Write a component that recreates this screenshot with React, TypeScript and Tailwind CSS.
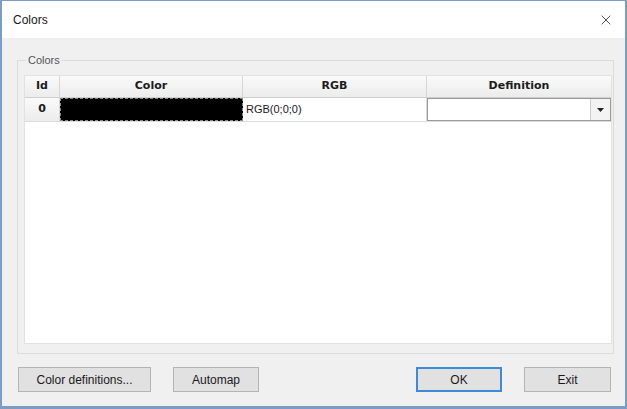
import { X } from "lucide-react";

const cellHead =
  "flex items-center justify-center border-r border-[#d6d6d6] bg-gradient-to-b from-[#fafafa] to-[#ececec] font-bold text-[11px] text-[#1b1b1b] [font-family:'DejaVu_Sans',sans-serif]";

function Btn({ label, w, primary }: { label: string; w: string; primary?: boolean }) {
  return (
    <button
      type="button"
      className={`h-[25px] ${w} flex items-center justify-center bg-[#e1e1e1] text-[12px] text-[#1a1a1a] [font-family:'Liberation_Sans',Arial,sans-serif] ${
        primary ? "border-2 border-[#3c8ad8]" : "border border-[#b4b4b4]"
      }`}
    >
      {label}
    </button>
  );
}

export default function App() {
  return (
    <div className="w-[627px] h-[409px] flex flex-col bg-[#f0f0f0] border-t border-x-2 border-b-[3px] border-[#7c9cc4] [font-family:'Liberation_Sans',Arial,sans-serif]">
      {/* title bar */}
      <div className="h-[37px] bg-white flex items-center justify-between pl-[11px] pr-[11px]">
        <span className="text-[12px] text-[#1a1a1a]">Colors</span>
        <X size={16} strokeWidth={1.3} className="text-[#333]" />
      </div>

      {/* group box */}
      <fieldset className="mt-[15px] ml-[15px] mr-[11px] h-[301px] border border-[#dcdcdc] pl-[6px] pr-[1px] pt-[8px]">
        <legend className="ml-[2px] px-[2px] text-[11px] leading-[14px] text-[#555]">Colors</legend>

        {/* grid */}
        <div className="h-[269px] bg-white border border-[#e2e2e2] flex flex-col">
          <div className="h-[22px] grid grid-cols-[35px_183px_184px_1fr] border-b border-[#cfcfcf]">
            <div className={cellHead}>Id</div>
            <div className={cellHead}>Color</div>
            <div className={cellHead}>RGB</div>
            <div className={`${cellHead} border-r-0`}>Definition</div>
          </div>
          <div className="h-[24px] grid grid-cols-[35px_183px_184px_1fr] border-b border-[#dcdcdc]">
            <div className={`${cellHead}`}>0</div>
            <div className="bg-black border border-dashed border-[#888]" />
            <div className="flex items-center pl-[3px] text-[11px] text-[#1a1a1a] border-r border-[#dcdcdc]">
              RGB(0;0;0)
            </div>
            <div className="flex justify-end border border-[#9a9a9a]">
              <div className="w-[20px] flex items-center justify-center bg-[#f3f3f3] border-l border-[#cfcfcf]">
                <svg width="7" height="4" viewBox="0 0 7 4">
                  <path d="M0 0h7L3.5 4z" fill="#222" />
                </svg>
              </div>
            </div>
          </div>
        </div>
      </fieldset>

      {/* buttons */}
      <div className="mt-[13px] h-[25px] flex items-center pl-[16px] pr-[14px]">
        <Btn label="Color definitions..." w="w-[133px]" />
        <div className="w-[22px]" />
        <Btn label="Automap" w="w-[86px]" />
        <div className="flex-1" />
        <Btn label="OK" w="w-[86px]" primary />
        <div className="w-[22px]" />
        <Btn label="Exit" w="w-[87px]" />
      </div>
    </div>
  );
}
